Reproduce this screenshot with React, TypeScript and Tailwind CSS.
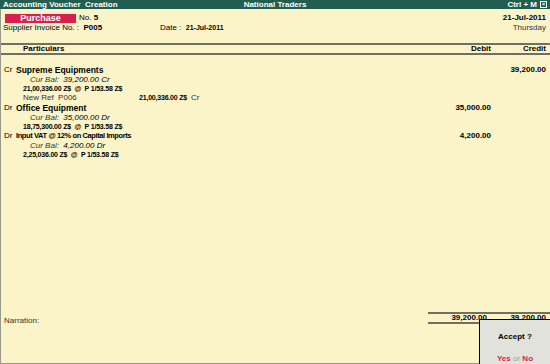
import React from "react";

const lines = "border-[#6f6f62]";

const Entry: React.FC<{
  side: string;
  name: string;
  bal: string;
  forex: string;
  debit?: string;
  credit?: string;
  narrow?: boolean;
  children?: React.ReactNode;
}> = ({ side, name, bal, forex, debit, credit, narrow, children }) => (
  <div className="flex flex-col">
    <div className="flex items-center h-[10px] leading-[10px]">
      <span className="w-[14px] pl-[3px] text-[8px]">{side}</span>
      <span
        className={
          narrow
            ? "flex-1 font-bold text-[7.5px] tracking-[-0.4px] pl-[1px]"
            : "flex-1 font-bold text-[8.5px] pl-[1px]"
        }
      >
        {name}
      </span>
      <span className="w-[80px] text-right font-bold text-[8px]">{debit}</span>
      <span className="w-[59px] text-right font-bold text-[8px] pr-[4px]">{credit}</span>
    </div>
    <div className="h-[9px] leading-[9px] pl-[29px] italic text-[8px] text-[#333]">
      Cur Bal:&nbsp; <span className="text-black">{bal}</span>
    </div>
    <div className="h-[9px] leading-[9px] pl-[22px] font-bold text-[7px] tracking-[-0.2px]">
      {forex} &nbsp;@&nbsp; P 1/53.58 Z$
    </div>
    {children}
  </div>
);

export default function App() {
  return (
    <div
      className="w-[550px] h-[364px] flex flex-col bg-[#fbf4c8] text-black relative overflow-hidden"
      style={{ fontFamily: "'Liberation Sans', Arial, sans-serif" }}
    >
      {/* title bar */}
      <div className="h-[9px] bg-[#215e4f] text-white font-bold text-[8px] leading-[9px] grid grid-cols-3 px-[3px]">
        <span>Accounting Voucher&nbsp; Creation</span>
        <span className="text-center">National Traders</span>
        <span className="flex justify-end items-center gap-[3px]">
          Ctrl + M
          <span className="w-[7px] h-[7px] border border-white text-[6px] leading-[5px] text-center">×</span>
        </span>
      </div>

      <div className="flex-1 flex flex-col border-l border-b border-[#9a9a8c]">
        {/* voucher header */}
        <div className="flex justify-between pt-[4px] pr-[4px] h-[34px]">
          <div className="flex flex-col">
            <div className="flex items-center h-[10px]">
              <span className="ml-[4px] w-[71px] h-[9px] bg-[#d91f4e] text-white font-bold text-[9px] leading-[9px] text-center">
                Purchase
              </span>
              <span className="ml-[3px] text-[8px]">
                No. <b>5</b>
              </span>
            </div>
            <div className="flex items-center h-[10px] text-[8px]">
              <span className="pl-[2px] w-[159px]">
                Supplier Invoice No. :&nbsp; <b>P005</b>
              </span>
              <span>
                Date :&nbsp; <b className="text-[7px]">21-Jul-2011</b>
              </span>
            </div>
          </div>
          <div className="flex flex-col items-end text-[8px]">
            <span className="h-[10px] leading-[10px] font-bold">21-Jul-2011</span>
            <span className="h-[10px] leading-[10px] text-[#333]">Thursday</span>
          </div>
        </div>

        {/* column header */}
        <div className={`flex h-[12px] items-center border-t-2 border-b-2 ${lines} text-[8px] font-bold`}>
          <span className="flex-1 pl-[22px]">Particulars</span>
          <span className="w-[80px] text-right">Debit</span>
          <span className="w-[59px] text-right pr-[4px]">Credit</span>
        </div>

        {/* entries */}
        <div className="flex-1 flex flex-col pt-[10px]">
          <Entry
            side="Cr"
            name="Supreme Equipments"
            bal="39,200.00 Cr"
            forex="21,00,336.00 Z$"
            credit="39,200.00"
          >
            <div className="h-[10px] leading-[9px] pl-[22px] flex text-[8px] text-[#333]">
              <span className="w-[116px]">New Ref&nbsp; P006</span>
              <span className="font-bold text-[7px] text-black tracking-[-0.2px]">21,00,336.00 Z$</span>
              <span className="ml-[4px]">Cr</span>
            </div>
          </Entry>
          <Entry
            side="Dr"
            name="Office Equipment"
            bal="35,000.00 Dr"
            forex="18,75,300.00 Z$"
            debit="35,000.00"
          />
          <Entry
            side="Dr"
            name="Input VAT @ 12% on Capital Imports"
            bal="4,200.00 Dr"
            forex="2,25,036.00 Z$"
            debit="4,200.00"
            narrow
          />
        </div>

        {/* footer */}
        <div className="h-[52px] flex text-[8px]">
          <span className="flex-1 pl-[3px] pt-[4px] text-[#333]">Narration:</span>
          <div className="w-[122px] flex flex-col pt-[1px]">
            <div className={`flex h-[12px] items-center border-t-2 border-b-2 ${lines} font-bold`}>
              <span className="w-[59px] text-right">39,200.00</span>
              <span className="flex-1 text-right pr-[4px]">39,200.00</span>
            </div>
          </div>
        </div>
      </div>

      {/* accept popup */}
      <div className="absolute left-[479px] top-[319px] w-[72px] h-[46px] border border-black bg-[#e2e2dc] flex flex-col items-center text-[8px] font-bold">
        <span className="mt-[11px]">Accept ?</span>
        <span className="mt-[10px]">
          <span className="text-[#d91f4e]">Yes</span>{" "}
          <span className="text-[#a0a09a] font-normal">or</span>{" "}
          <span className="text-[#d91f4e]">No</span>
        </span>
      </div>
    </div>
  );
}
